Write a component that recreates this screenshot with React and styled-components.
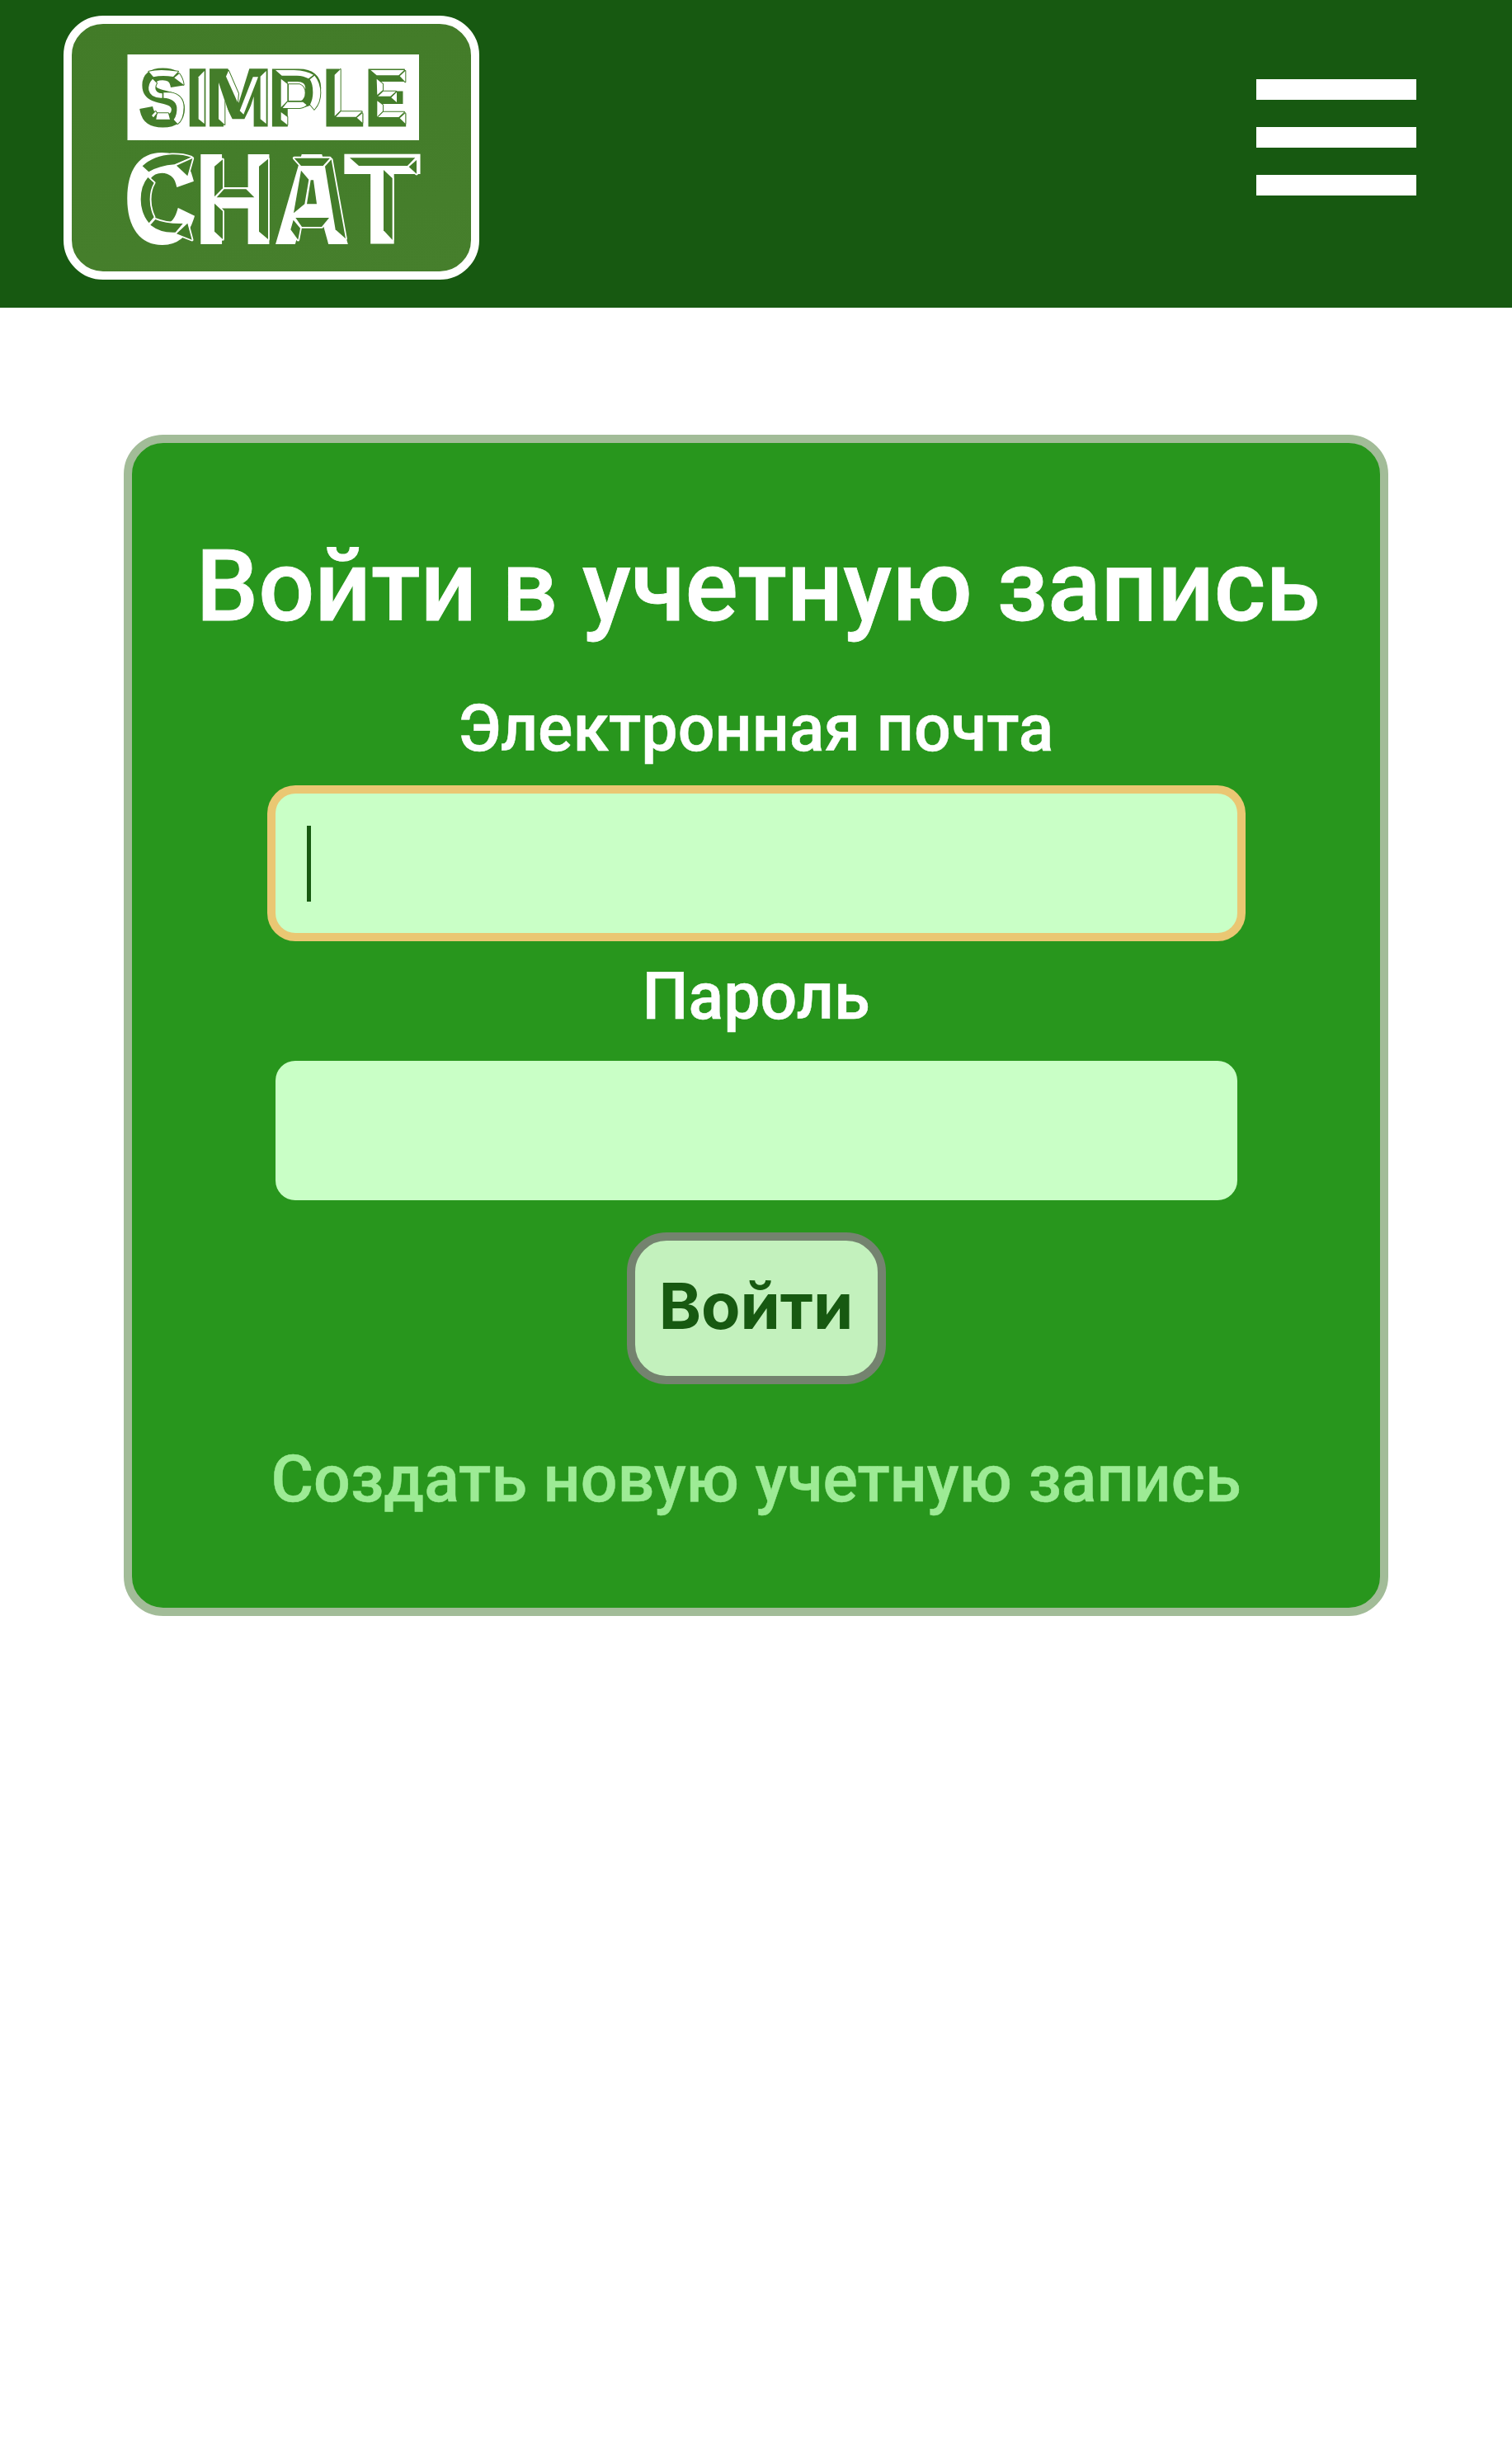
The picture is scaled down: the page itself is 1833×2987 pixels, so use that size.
import React from "react";
import styled, { createGlobalStyle } from "styled-components";

const Global = createGlobalStyle`
  *, *::before { box-sizing: border-box; }
  body { margin: 0; background: #fff; font-family: Roboto, "Noto Sans", sans-serif; }
`;

const Header = styled.header`
  display: flex;
  justify-content: space-between;
  align-items: flex-start;
  height: 373px;
  padding: 19px 116px 0 77px;
  background: #175911;
`;

const LogoLink = styled.a`
  display: block;
  width: 504px;
  height: 320px;
  border: 10px solid #fff;
  border-radius: 48px;
  overflow: hidden;
  background: linear-gradient(170deg, #427b28, #467f2c);
`;

const LogoArt = styled.svg`
  display: block;
  width: 484px;
  height: 300px;
`;

const LogoWord = styled.text`
  font-family: "Liberation Sans", Arial, sans-serif;
  font-weight: 700;
  font-size: ${(p) => p.$size}px;
  fill: ${(p) => p.$color};
  stroke: ${(p) => p.$color};
  stroke-width: ${(p) => p.$stroke}px;
`;

const Facets = styled.g`
  fill: ${(p) => p.$fill};
  stroke: ${(p) => p.$edge};
  stroke-width: ${(p) => p.$width}px;
  stroke-linejoin: round;
  paint-order: stroke;
`;

const MenuButton = styled.button`
  display: flex;
  flex-direction: column;
  gap: 33px;
  width: 194px;
  margin-top: 77px;
  padding: 0;
  border: 0;
  background: none;
`;

const MenuBar = styled.span`
  width: 100%;
  height: 25px;
  background: #fff;
`;

const Main = styled.main`
  display: flex;
  justify-content: center;
  padding-top: 154px;
`;

const Card = styled.form`
  display: flex;
  flex-direction: column;
  align-items: center;
  width: 1533px;
  height: 1432px;
  padding-top: 94px;
  border: 10px solid #a2bc98;
  border-radius: 48px;
  background: #28961d;
`;

const Title = styled.h1`
  margin: 0 0 56px;
  padding: 10px 0 0 5px;
  font-size: 120px;
  font-weight: 500;
  line-height: 140px;
  white-space: nowrap;
  color: #fff;
  -webkit-text-stroke: 0.8px #fff;
`;

const Label = styled.label`
  margin-bottom: ${(p) => p.$gap}px;
  font-size: 79px;
  font-weight: 500;
  line-height: 92px;
  color: #fff;
  -webkit-text-stroke: 0.5px #fff;
`;

const Field = styled.div`
  display: flex;
  align-items: center;
  width: 1166px;
  height: 169px;
  margin-bottom: ${(p) => p.$gap}px;
  padding-left: 38px;
  border-radius: 24px;
  background: #c9ffc6;
  box-shadow: ${(p) => (p.$focused ? "0 0 0 10px #eac773" : "none")};
`;

const Caret = styled.span`
  width: 5px;
  height: 92px;
  background: #175911;
`;

const Submit = styled.button`
  width: 314px;
  height: 184px;
  margin: 0 0 69px;
  padding: 0 0 6px;
  border: 10px solid #74836f;
  border-radius: 48px;
  background: #c3f1bd;
  color: #175911;
  font: 700 77.6px Inter, Arial, sans-serif;
`;

const RegisterLink = styled.a`
  font-size: 79px;
  font-weight: 500;
  line-height: 92px;
  white-space: nowrap;
  color: #9deb95;
  -webkit-text-stroke: 0.5px #9deb95;
`;

/* Horizontal metrics of the bold capitals, in ems: advance, ink start, ink end. */
const METRICS = {
  S: [0.667, 0.03, 0.625], I: [0.278, 0.067, 0.213], M: [0.833, 0.067, 0.765],
  P: [0.667, 0.067, 0.63], L: [0.611, 0.067, 0.585], E: [0.667, 0.067, 0.625],
  C: [0.722, 0.045, 0.69], H: [0.722, 0.067, 0.655], A: [0.722, 0.01, 0.71],
  T: [0.611, 0.02, 0.59],
};

function StretchedWord({ y, size, stroke, color, letters }) {
  return (
    <LogoWord y={y} $size={size} $stroke={stroke} $color={color}>
      {letters.map(([ch, from, to]) => {
        const [adv, a, b] = METRICS[ch];
        const k = (to - from - stroke) / ((b - a) * size);
        return (
          <tspan
            key={ch}
            x={from + stroke / 2 - a * size * k}
            textLength={adv * size * k}
            lengthAdjust="spacingAndGlyphs"
          >
            {ch}
          </tspan>
        );
      })}
    </LogoWord>
  );
}

function Logo() {
  return (
    <LogoArt viewBox="87 29 484 300">
      <rect x="154.5" y="66" width="353.5" height="104" fill="#fff" />
      <StretchedWord
        y={151} size={95} stroke={5} color="#447d2a"
        letters={[["S", 169.5, 224], ["I", 230, 249.5], ["M", 254, 324.5], ["P", 330, 389], ["L", 395, 441], ["E", 446, 492.5]]}
      />
      <StretchedWord
        y={292} size={146} stroke={8} color="#fff"
        letters={[["C", 154, 235.5], ["H", 243, 327], ["A", 333, 423], ["T", 418.5, 508]]}
      />
      <Facets $fill="#fff" $edge="#447d2a" $width={6} transform="translate(140 50) scale(.33333)">
        <path d="M121 110Q160 100 228 110L210 129Q170 122 138 130Z" />
        <path d="M232 118Q245 135 248 158L214 133Z" />
        <path d="M135 137Q118 155 121 178Q128 208 170 206V190Q145 187 145 170Q145 160 150 152Z" />
        <path d="M175 187H200Q247 195 248 240Q247 285 226 300L212 285Q225 268 223 240Q218 208 175 206Z" />
        <path d="M152 262H192L198 284H148Z" />
        <path d="M132 270L146 255L150 262L138 277Z" />
        <path d="M302 130L323 108V300L302 283Z" />
        <path d="M375 150L397 215V303L375 283Z" />
        <path d="M402 128L411 107L447 190L444 222Z" />
        <path d="M500 130H519L466 266L452 253Z" />
        <path d="M527 128L548 108V300L527 283Z" />
        <path d="M402 316V236L425 283H469L494 232V316Z" stroke="none" />
      </Facets>
      <Facets $fill="#fff" $edge="#447d2a" $width={6} transform="translate(320 50) scale(.33333)">
        <path d="M42 105H110Q155 107 180 122L162 136Q145 126 120 125H65Z" />
        <path d="M184 125Q205 150 205 187Q205 225 183 248L168 230Q178 210 178 187Q178 155 167 139Z" />
        <path d="M90 157H130Q149 165 149 187Q149 210 135 216H90Z" />
        <path d="M62 137L85 155V218L62 240Z" />
        <path d="M85 221H142L155 232Q145 242 130 243H68Z" />
        <path d="M62 258L85 275V304L62 286Z" />
        <path d="M257 122L278 102V252L257 272Z" />
        <path d="M280 256H356L335 275H262Z" />
        <path d="M358 262V296L338 278Z" />
        <path d="M388 105H510L490 124H410Z" />
        <path d="M514 108V148L494 127Z" />
        <path d="M410 137L432 155V178L412 195Z" />
        <path d="M434 182H480L460 200H415Z" />
        <path d="M483 185V222L463 205Z" />
        <path d="M412 217L432 232V255L412 275Z" />
        <path d="M434 257H510L490 276H415Z" />
        <path d="M514 262V299L494 280Z" />
      </Facets>
      <Facets $fill="#447d2a" $edge="#fff" $width={11} transform="translate(140 170) scale(.33333)">
        <path d="M98 94Q140 55 205 52Q245 51 276 62L215 88Q160 92 121 115Z" />
        <path d="M222 92L280 66L262 130Z" />
        <path d="M118 135Q92 165 92 215Q92 265 122 301L140 280Q125 250 125 215Q125 180 140 155Z" />
        <path d="M145 288Q185 305 245 303L218 335Q165 338 127 308Z" />
        <path d="M262 302L278 362L222 340Z" />
        <path d="M360 95L390 70V175L360 205Z" />
        <path d="M395 178H475L505 208H368Z" />
        <path d="M360 230L390 258V360L360 332Z" />
        <path d="M522 95L555 68V360L522 332Z" />
      </Facets>
      <Facets $fill="#447d2a" $edge="#fff" $width={11} transform="translate(320 170) scale(.33333)">
        <path d="M110 65H240L215 93H135Z" />
        <path d="M222 95L245 70L297 358L260 325Z" />
        <path d="M135 110L163 143L148 232L108 265Z" />
        <path d="M170 145H180L192 232H156Z" />
        <path d="M115 282H237L210 315H138Z" />
        <path d="M107 290L132 320L124 362L97 325Z" />
        <path d="M312 64H550L522 93H345Z" />
        <path d="M555 72V122L527 97Z" />
        <path d="M435 108L467 138V362L435 328Z" />
      </Facets>
    </LogoArt>
  );
}

export default function App() {
  return (
    <>
      <Global />
      <Header>
        <LogoLink aria-label="Simple Chat">
          <Logo />
        </LogoLink>
        <MenuButton type="button">
          <MenuBar />
          <MenuBar />
          <MenuBar />
        </MenuButton>
      </Header>
      <Main>
        <Card>
          <Title>Войти в учетную запись</Title>
          <Label $gap={33}>Электронная почта</Label>
          <Field $focused $gap={31}>
            <Caret />
          </Field>
          <Label $gap={32}>Пароль</Label>
          <Field $gap={39} />
          <Submit type="button">Войти</Submit>
          <RegisterLink>Создать новую учетную запись</RegisterLink>
        </Card>
      </Main>
    </>
  );
}
